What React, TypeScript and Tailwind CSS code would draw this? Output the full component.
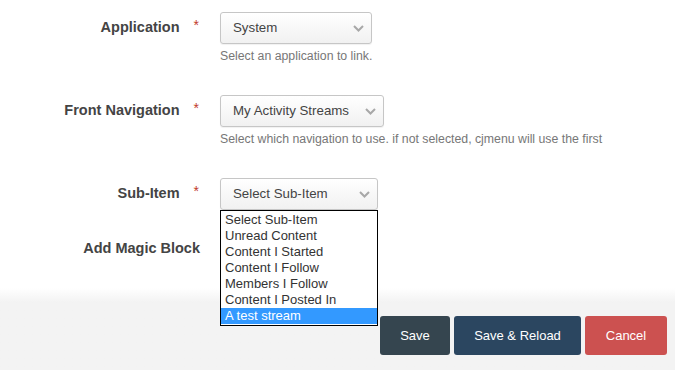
import React from "react";

const Chevron = () => (
  <svg width="11" height="7" viewBox="0 0 11 7" className="shrink-0">
    <polyline points="1,1 5.5,5.5 10,1" fill="none" stroke="#a8a8a8" strokeWidth="2" />
  </svg>
);

function FakeSelect({ value, width }: { value: string; width: string }) {
  return (
    <div
      className={`${width} h-[32px] flex items-center justify-between pl-[12px] pr-[7px] border border-[#c6c6c6] rounded-[3px] bg-gradient-to-b from-white to-[#f1f1f1] shadow-[0_1px_1px_rgba(0,0,0,0.06)] text-[13.3px] text-[#444]`}
    >
      <span>{value}</span>
      <Chevron />
    </div>
  );
}

function Label({ text, required }: { text: string; required?: boolean }) {
  return (
    <div className="w-[200px] shrink-0 h-[32px] flex items-center justify-end text-[14.5px] font-bold text-[#444]">
      <span>{text}</span>
      {required && <span className="ml-[14px] mr-[1px] text-[#c0392b] font-normal text-[14px] relative top-[-3px]">*</span>}
    </div>
  );
}

export default function App() {
  const items = [
    "Select Sub-Item",
    "Unread Content",
    "Content I Started",
    "Content I Follow",
    "Members I Follow",
    "Content I Posted In",
    "A test stream",
  ];
  return (
    <div className="w-[675px] h-[370px] overflow-hidden bg-white flex flex-col" style={{ fontFamily: '"Liberation Sans", Arial, sans-serif' }}>
      <div className="flex flex-col pt-[12px] h-[288px]">
        <div className="flex">
          <Label text="Application" required />
          <div className="ml-[20px] flex flex-col">
            <FakeSelect value="System" width="w-[152px]" />
            <div className="mt-[4px] leading-[17px] text-[12.3px] text-[#777]">Select an application to link.</div>
          </div>
        </div>
        <div className="flex mt-[30px]">
          <Label text="Front Navigation" required />
          <div className="ml-[20px] flex flex-col">
            <FakeSelect value="My Activity Streams" width="w-[164px]" />
            <div className="mt-[4px] leading-[17px] text-[12.3px] text-[#777]">
              Select which navigation to use. if not selected, cjmenu will use the first
            </div>
          </div>
        </div>
        <div className="flex mt-[30px]">
          <Label text="Sub-Item" required />
          <div className="ml-[20px] relative">
            <FakeSelect value="Select Sub-Item" width="w-[158px]" />
            <div className="absolute left-0 top-[32px] z-10 w-[158px] border border-black bg-white py-[1px] text-[13px] leading-[16px] text-[#333]">
              {items.map((it, i) => (
                <div
                  key={it}
                  className={i === items.length - 1 ? "bg-[#3399ff] text-white pl-[4px]" : "pl-[4px]"}
                >
                  {it}
                </div>
              ))}
            </div>
          </div>
        </div>
        <div className="flex mt-[23px]">
          <Label text="Add Magic Block" />
        </div>
      </div>
      <div className="flex-1 bg-gradient-to-b from-white to-[#f3f3f3] to-[14px] bg-[#f3f3f3] flex justify-end items-start pt-[28px] pr-[8px] gap-[4px]">
        <button className="h-[39px] w-[70px] rounded-[3px] bg-[#35454f] text-white text-[13px]">Save</button>
        <button className="h-[39px] w-[127px] rounded-[3px] bg-[#2b4660] text-white text-[13px]">Save &amp; Reload</button>
        <button className="h-[39px] w-[82px] rounded-[3px] bg-[#cc5150] text-white text-[13px]">Cancel</button>
      </div>
    </div>
  );
}
